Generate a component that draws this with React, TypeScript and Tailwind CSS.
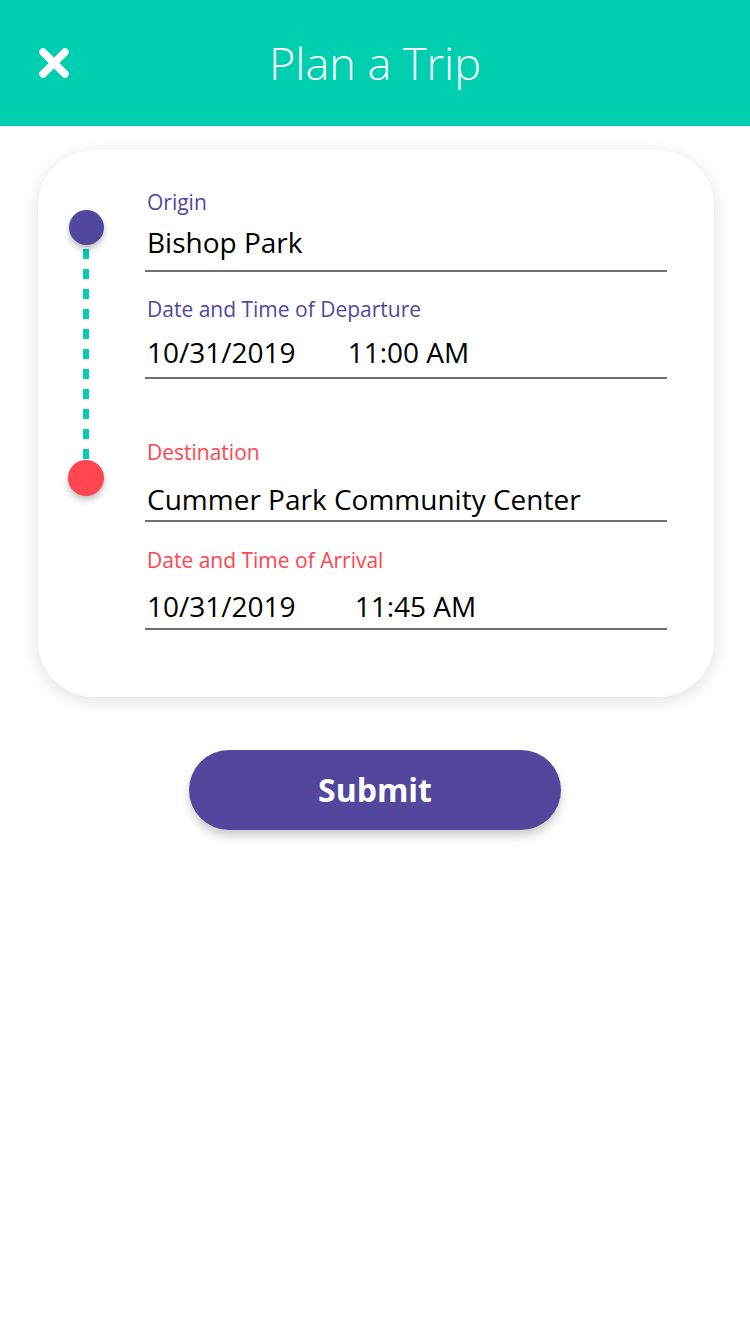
import React from 'react';

interface FieldProps {
  label: string;
  labelColor: string;
  labelClass: string;
  valueClass: string;
  children: React.ReactNode;
}

function Field({ label, labelColor, labelClass, valueClass, children }: FieldProps) {
  return (
    <div>
      <div className={`text-[21px] leading-[28px] pl-[2px] ${labelColor} ${labelClass}`}>{label}</div>
      <div className={`text-[28px] leading-[36px] text-black border-b-2 border-[#707070] whitespace-nowrap pl-[2px] ${valueClass}`}>
        {children}
      </div>
    </div>
  );
}

export default function App() {
  return (
    <div className="min-h-[1334px] w-[750px] bg-white font-['Open_Sans',sans-serif]">
      <header className="relative h-[126px] bg-[#00CEB0] flex items-center justify-center">
        <button className="absolute left-[38px] top-[47px] w-[32px] h-[32px]">
          <svg viewBox="0 0 32 32" width="32" height="32">
            <path d="M5 5 L27 27 M27 5 L5 27" stroke="#fff" strokeWidth="7.5" strokeLinecap="round" />
          </svg>
        </button>
        <h1 className="text-white text-[45px] font-light">Plan a Trip</h1>
      </header>

      <div className="ml-[38px] mt-[24px] w-[676px] bg-white rounded-[56px] shadow-[0_4px_18px_rgba(0,0,0,0.12)] flex pl-[30px] pr-[47px] pt-[38px] pb-[67px]">
        <div className="w-[36px] flex flex-col items-center pt-[22px]">
          <div className="w-[35px] h-[35px] rounded-full bg-[#52479F] shadow-[0_4px_6px_rgba(0,0,0,0.25)] relative z-10" />
          <svg width="6" height="215" className="block">
            <line x1="3" y1="0" x2="3" y2="215" stroke="#00CEB0" strokeWidth="6" strokeDasharray="10 10" strokeDashoffset="16" />
          </svg>
          <div className="w-[36px] h-[36px] rounded-full bg-[#FF4550] shadow-[0_4px_6px_rgba(0,0,0,0.25)]" />
        </div>

        <div className="flex-1 ml-[41px]">
          <Field label="Origin" labelColor="text-[#52479F]" labelClass="" valueClass="mt-[8px] pb-[10px]">
            Bishop Park
          </Field>
          <Field label="Date and Time of Departure" labelColor="text-[#52479F]" labelClass="mt-[23px]" valueClass="mt-[11px] pb-[7px]">
            <span>10/31/2019</span>
            <span className="ml-[52px]">11:00 AM</span>
          </Field>
          <Field label="Destination" labelColor="text-[#FF4550]" labelClass="mt-[59px]" valueClass="mt-[15px] pb-[3px]">
            Cummer Park Community Center
          </Field>
          <Field label="Date and Time of Arrival" labelColor="text-[#FF4550]" labelClass="mt-[24px]" valueClass="mt-[14px] pb-[4px]">
            <span>10/31/2019</span>
            <span className="ml-[59px]">11:45 AM</span>
          </Field>
        </div>
      </div>

      <div className="flex justify-center mt-[53px]">
        <button className="w-[372px] h-[80px] rounded-full bg-[#52479C] text-white text-[32px] font-bold shadow-[0_6px_10px_rgba(0,0,0,0.2)]">
          Submit
        </button>
      </div>
    </div>
  );
}
